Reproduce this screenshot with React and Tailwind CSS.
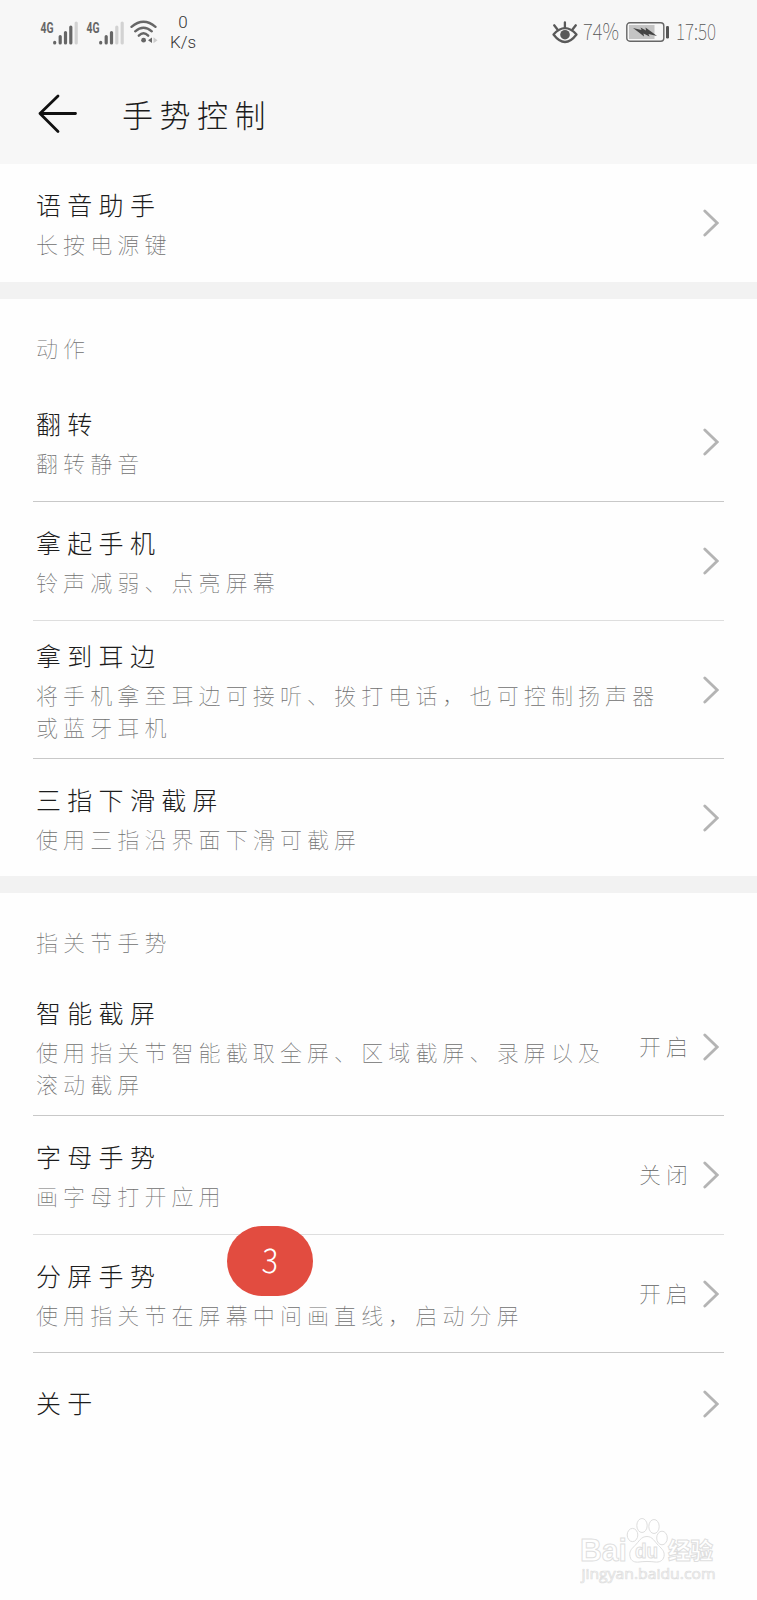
const CJK = "font-['Noto_Sans_CJK_SC',sans-serif]";

function Signal({ strong }) {
  return (
    <svg className="h-[26px] w-[39px] shrink-0" viewBox="0 0 39 26">
      <text x="0.5" y="14" fontSize="14.500" fontWeight="700" fontFamily="Roboto, sans-serif" textLength="13" lengthAdjust="spacingAndGlyphs" fill="#666">4G</text>
      <g strokeWidth="3.2" strokeLinecap="round" stroke="#666">
        <path d="M14.700 24v-.6M20.200 24v-6.500M25.500 24V13.500" />
        <path d="M30.800 24V8" stroke={strong ? '#666' : '#d2d2d2'} />
        <path d="M36.200 24V4" stroke="#d2d2d2" />
      </g>
    </svg>
  );
}

function Wifi() {
  return (
    <svg className="h-6 w-7 shrink-0" viewBox="0 0 28 24" fill="none" stroke="#666" strokeWidth="2.4" strokeLinecap="round">
      <path d="M1.500 6.800Q13.500-3.200 25.500 6.800" />
      <path d="M5.200 11.300Q13.500 4 21.800 11.300" />
      <path d="M8.800 15.700Q13.500 11 18.200 15.700" />
      <circle cx="13.600" cy="20.200" r="2.400" fill="#666" stroke="none" />
      <path d="M18 20.200l4-2.800v5.600z" fill="#666" stroke="none" />
      <path d="M23.500 17.200l4 3-4 3z" fill="#ccc" stroke="none" />
    </svg>
  );
}

function Eye() {
  return (
    <svg className="h-[23px] w-[26px] shrink-0" viewBox="0 0 26 23" fill="none" stroke="#595959" strokeWidth="2.300" strokeLinecap="round">
      <path d="M1.500 13.500Q13 .8 24.500 13.500Q13 28.500 1.500 13.500Z" strokeLinejoin="round" />
      <path d="M12.900 1.500v5M2.200 4.300l3.100 4M23.800 4.300l-3.100 4" />
      <circle cx="13" cy="13.700" r="4.800" fill="#595959" stroke="none" />
    </svg>
  );
}

function Battery() {
  return (
    <svg className="h-5 w-[43px] shrink-0" viewBox="0 0 43 20">
      <rect x=".8" y=".8" width="37" height="18.400" rx="3" fill="none" stroke="#666" strokeWidth="1.400" />
      <rect x="3" y="3" width="25.500" height="14" fill="#c4c4c4" />
      <path d="M7 6l8.500 2-1-2.500 5.500 3-.5-3L25 9.500l6 4.500-8.500-2 1 2.500-6-3 .5 3L13 10.500z" fill="#444" />
      <rect x="40" y="4" width="3" height="12.500" rx="1.200" fill="#555" />
    </svg>
  );
}

function Chevron() {
  return (
    <svg className="ml-4 h-7 w-4 shrink-0" viewBox="0 0 16 28" fill="none" stroke="#b4b4b4" strokeWidth="2.800" strokeLinecap="round">
      <path d="M1.800 2l12.400 12L1.800 26" />
    </svg>
  );
}

function Row({ title, desc, state, size = 'h-[118px]', line = 'border-[#c8c8c8]', last }) {
  return (
    <div className={`mx-[33px] flex items-center pl-[3px] pr-[5px] ${size} ${last ? '' : 'border-b ' + line}`}>
      <div className="min-w-0 flex-1 pb-[5px]">
        <div className="h-11 whitespace-nowrap text-[25px] font-light leading-[44px] tracking-[6.300px] text-[#1c1c1c]">{title}</div>
        {desc && (
          <div className="mt-px whitespace-pre text-[22px] font-thin leading-[32px] tracking-[5.100px] text-[#707070]">{desc}</div>
        )}
      </div>
      {state && <div className="-mr-[6px] shrink-0 pb-[4px] text-[22px] font-thin leading-[32px] tracking-[5px] text-[#606060]">{state}</div>}
      <Chevron />
    </div>
  );
}

function Label({ children, size }) {
  return (
    <div className={`pl-9 pt-8 text-[22px] font-thin leading-[32px] tracking-[5.100px] text-[#707070] ${size}`}>{children}</div>
  );
}

function Watermark() {
  return (
    <svg className="h-[68px] w-[139px]" viewBox="0 0 139 68" fill="#fff" stroke="#dedede" strokeWidth="1">
      <text x="0" y="43" fontSize="32" fontWeight="700" fontFamily="Liberation Sans, sans-serif" textLength="47" lengthAdjust="spacingAndGlyphs">Bai</text>
      <ellipse cx="52.500" cy="17" rx="5.300" ry="6.600" />
      <ellipse cx="62" cy="7.500" rx="5.200" ry="7" />
      <ellipse cx="74" cy="8.500" rx="5.200" ry="7" />
      <ellipse cx="82" cy="20" rx="5.300" ry="6.800" />
      <path d="M67 18.500c-6 0-8 5-12 9s-6 6-5 11c1 5 5 6 9 5.500 5-.7 11-.7 16 0 4 .5 8-1 9-5.500 1-5-2-7.500-5.500-11-4-4-6-9-11.500-9z" />
      <text x="55" y="40" fontSize="20" fontWeight="700" fontFamily="Liberation Sans, sans-serif" textLength="23" lengthAdjust="spacingAndGlyphs">du</text>
      <text x="88" y="41" fontSize="23" fontWeight="900" fontFamily="Noto Sans CJK SC, sans-serif" textLength="45" lengthAdjust="spacingAndGlyphs">经验</text>
      <text x="1.500" y="60.500" fontSize="15" fontFamily="Open Sans, sans-serif" textLength="134" lengthAdjust="spacingAndGlyphs" fill="#fafafa" strokeWidth=".7">jingyan.baidu.com</text>
    </svg>
  );
}

export default function App() {
  return (
    <div className={`flex h-[1600px] w-[757px] flex-col overflow-hidden bg-[#fefefe] ${CJK}`}>
      <header className="h-[164px] shrink-0 bg-[#f7f7f7]">
        <div className="flex h-16 items-center justify-between pl-10 pr-10">
          <div className="flex items-center">
            <Signal strong />
            <div className="ml-[7px] flex"><Signal /></div>
            <div className="ml-[5px] flex"><Wifi /></div>
            <div className="ml-[11px] w-7 text-center font-[Roboto,sans-serif] text-[17px] font-light leading-5 text-[#333]">
              <div>0</div>
              <div>K/s</div>
            </div>
          </div>
          <div className="flex items-center">
            <Eye />
            <svg className="ml-1 h-9 w-[38px]" viewBox="0 0 38 36" fill="#555">
              <text x="1" y="26" fontSize="23" fontWeight="100" fontFamily="Noto Sans CJK SC, sans-serif" textLength="36" lengthAdjust="spacingAndGlyphs">74%</text>
            </svg>
            <div className="ml-[6px] flex"><Battery /></div>
            <svg className="ml-[7px] h-9 w-[41px]" viewBox="0 0 41 36" fill="#555">
              <text x="0" y="26" fontSize="23" fontWeight="100" fontFamily="Noto Sans CJK SC, sans-serif" textLength="40" lengthAdjust="spacingAndGlyphs">17:50</text>
            </svg>
          </div>
        </div>
        <div className="flex h-[100px] items-start pl-[38px]">
          <svg className="mt-[30px] h-10 w-10" viewBox="0 0 40 40" fill="none" stroke="#111" strokeWidth="2.800" strokeLinecap="round" strokeLinejoin="round">
            <path d="M37.500 19.500H2M20 2L2 19.500l18 18" />
          </svg>
          <h1 className="ml-[44px] mt-[26px] text-[31px] font-light leading-[48px] tracking-[6.500px] text-[#1c1c1c]">手势控制</h1>
        </div>
      </header>

      <Row title="语音助手" desc="长按电源键" last />
      <div className="h-[17px] shrink-0 bg-[#f2f2f2]" />

      <Label size="h-[84px]">动作</Label>
      <Row title="翻转" desc="翻转静音" size="h-[119px]" />
      <Row title="拿起手机" desc="铃声减弱、点亮屏幕" size="h-[119px]" line="border-[#dedede]" />
      <Row title="拿到耳边" desc={'将手机拿至耳边可接听、拨打电话，也可控制扬声器\n或蓝牙耳机'} size="h-[138px]" />
      <Row title="三指下滑截屏" desc="使用三指沿界面下滑可截屏" size="h-[117px]" last />
      <div className="h-[17px] shrink-0 bg-[#f2f2f2]" />

      <Label size="h-[86px]">指关节手势</Label>
      <Row title="智能截屏" desc={'使用指关节智能截取全屏、区域截屏、录屏以及\n滚动截屏'} state="开启" size="h-[137px]" />
      <Row title="字母手势" desc="画字母打开应用" state="关闭" size="h-[119px]" line="border-[#dedede]" />
      <div className="relative">
        <Row title="分屏手势" desc="使用指关节在屏幕中间画直线，启动分屏" state="开启" />
        <div className="absolute -top-[9px] left-[227px] flex h-[70px] w-[86px] items-center justify-center rounded-[35px] bg-[#e24c40] pb-[6px] text-[34px] font-light text-white">
          <span className="inline-block -skew-x-3 scale-x-90">3</span>
        </div>
      </div>
      <Row title="关于" size="h-[102px]" last />

      <div className="mt-auto flex justify-end pb-[14px] pr-[38px]">
        <Watermark />
      </div>
    </div>
  );
}
